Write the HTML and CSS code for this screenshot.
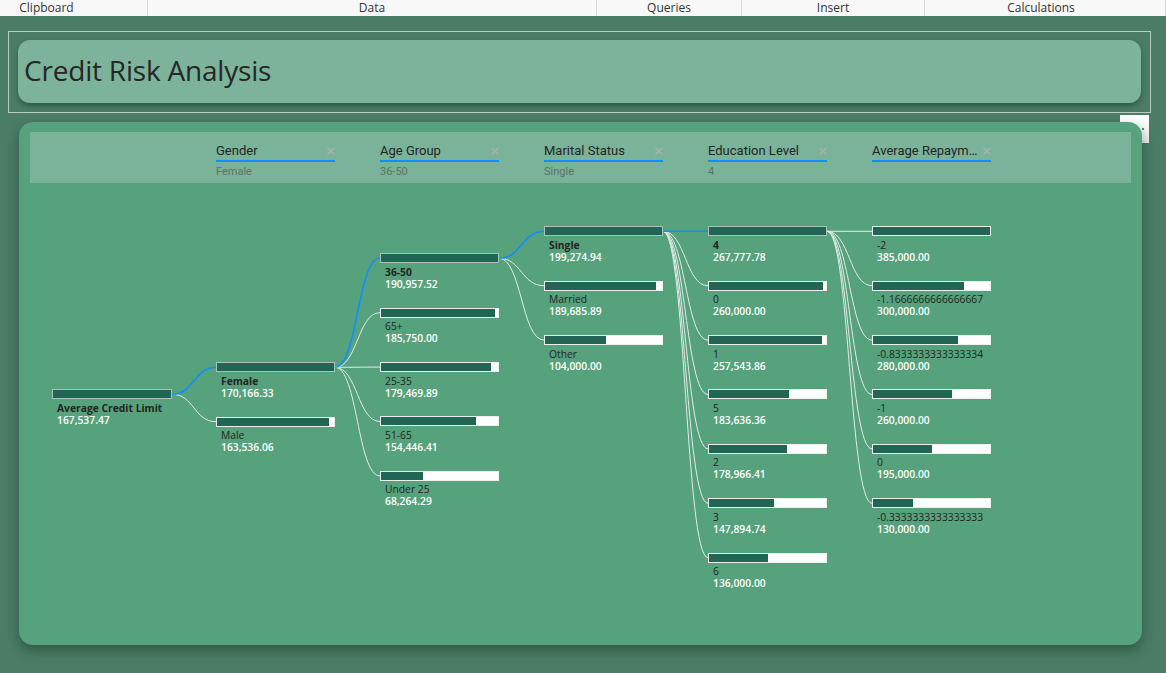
FILE: index.html
```html
<!DOCTYPE html>
<html lang="en">
<head>
<meta charset="utf-8">
<title>Credit Risk Analysis</title>
<link rel="stylesheet" href="styles.css">
</head>
<body>
<div class="ribbon">
  <div class="rcell rc-clip">Clipboard</div>
  <div class="rcell rc-data">Data</div>
  <div class="rcell rc-queries">Queries</div>
  <div class="rcell rc-insert">Insert</div>
  <div class="rcell rc-calc">Calculations</div>
</div>
<div class="canvas">
  <div class="title-frame">
    <div class="title-card"><h1 class="title">Credit Risk Analysis</h1></div>
  </div>
  <div class="vh-square"><span class="vh-dot"></span></div>
  <div class="main-card">
    <div class="band">
      <div class="filter">
        <div class="fhead"><span class="fname">Gender</span><svg class="fx" viewBox="0 0 8 8"><path d="M0.5 0.5L7.5 7.5M7.5 0.5L0.5 7.5"/></svg></div>
        <div class="fval">Female</div>
      </div>
      <div class="filter">
        <div class="fhead"><span class="fname">Age Group</span><svg class="fx" viewBox="0 0 8 8"><path d="M0.5 0.5L7.5 7.5M7.5 0.5L0.5 7.5"/></svg></div>
        <div class="fval">36-50</div>
      </div>
      <div class="filter">
        <div class="fhead"><span class="fname">Marital Status</span><svg class="fx" viewBox="0 0 8 8"><path d="M0.5 0.5L7.5 7.5M7.5 0.5L0.5 7.5"/></svg></div>
        <div class="fval">Single</div>
      </div>
      <div class="filter">
        <div class="fhead"><span class="fname">Education Level</span><svg class="fx" viewBox="0 0 8 8"><path d="M0.5 0.5L7.5 7.5M7.5 0.5L0.5 7.5"/></svg></div>
        <div class="fval">4</div>
      </div>
      <div class="filter">
        <div class="fhead"><span class="fname">Average Repaym…</span><svg class="fx" viewBox="0 0 8 8"><path d="M0.5 0.5L7.5 7.5M7.5 0.5L0.5 7.5"/></svg></div>
        <div class="fval"></div>
      </div>
    </div>

    <div class="tree">
      <svg class="links" width="1101" height="452" viewBox="30 183 1101 452">
        <g class="lk">
          <path d="M172 394.3C194 394.3 194 421.7 216 421.7"/>
          <path d="M335 367.3C357.5 367.3 357.5 312.7 380 312.7"/>
          <path d="M335 367.3C357.5 367.3 357.5 367.1 380 367.1"/>
          <path d="M335 367.3C357.5 367.3 357.5 421.5 380 421.5"/>
          <path d="M335 367.3C357.5 367.3 357.5 475.9 380 475.9"/>
          <path d="M499 258.3C521.5 258.3 521.5 285.7 544 285.7"/>
          <path d="M499 258.3C521.5 258.3 521.5 340.1 544 340.1"/>
          <path d="M663 231.3C685.5 231.3 685.5 285.7 708 285.7"/>
          <path d="M663 231.3C685.5 231.3 685.5 340.1 708 340.1"/>
          <path d="M663 231.3C685.5 231.3 685.5 394.5 708 394.5"/>
          <path d="M663 231.3C685.5 231.3 685.5 448.9 708 448.9"/>
          <path d="M663 231.3C685.5 231.3 685.5 503.3 708 503.3"/>
          <path d="M663 231.3C685.5 231.3 685.5 557.7 708 557.7"/>
          <path d="M827 231.3L872 231.3"/>
          <path d="M827 231.3C849.5 231.3 849.5 285.7 872 285.7"/>
          <path d="M827 231.3C849.5 231.3 849.5 340.1 872 340.1"/>
          <path d="M827 231.3C849.5 231.3 849.5 394.5 872 394.5"/>
          <path d="M827 231.3C849.5 231.3 849.5 448.9 872 448.9"/>
          <path d="M827 231.3C849.5 231.3 849.5 503.3 872 503.3"/>
        </g>
        <g class="lk-sel">
          <path d="M172 394.3C194 394.3 194 367.3 216 367.3"/>
          <path d="M335 367.3C357.5 367.3 357.5 258.3 380 258.3"/>
          <path d="M499 258.3C521.5 258.3 521.5 231.3 544 231.3"/>
          <path d="M663 231.3L708 231.3"/>
        </g>
      </svg>

      <div class="col col-root">
        <div class="node">
          <div class="bar bar-root sel"><div class="fill" style="width:100%"></div></div>
          <div class="lbl b">Average Credit Limit</div>
          <div class="val">167,537.47</div>
        </div>
      </div>

      <div class="col col-l1">
        <div class="node">
          <div class="bar sel"><div class="fill" style="width:100%"></div></div>
          <div class="lbl b">Female</div>
          <div class="val">170,166.33</div>
        </div>
        <div class="node">
          <div class="bar"><div class="fill" style="width:96.1%"></div></div>
          <div class="lbl">Male</div>
          <div class="val">163,536.06</div>
        </div>
      </div>

      <div class="col col-l2">
        <div class="node">
          <div class="bar sel"><div class="fill" style="width:100%"></div></div>
          <div class="lbl b">36-50</div>
          <div class="val">190,957.52</div>
        </div>
        <div class="node">
          <div class="bar"><div class="fill" style="width:97.27%"></div></div>
          <div class="lbl">65+</div>
          <div class="val">185,750.00</div>
        </div>
        <div class="node">
          <div class="bar"><div class="fill" style="width:93.98%"></div></div>
          <div class="lbl">25-35</div>
          <div class="val">179,469.89</div>
        </div>
        <div class="node">
          <div class="bar"><div class="fill" style="width:80.88%"></div></div>
          <div class="lbl">51-65</div>
          <div class="val">154,446.41</div>
        </div>
        <div class="node">
          <div class="bar"><div class="fill" style="width:35.75%"></div></div>
          <div class="lbl">Under 25</div>
          <div class="val">68,264.29</div>
        </div>
      </div>

      <div class="col col-top">
        <div class="node">
          <div class="bar sel"><div class="fill" style="width:100%"></div></div>
          <div class="lbl b">Single</div>
          <div class="val">199,274.94</div>
        </div>
        <div class="node">
          <div class="bar"><div class="fill" style="width:95.19%"></div></div>
          <div class="lbl">Married</div>
          <div class="val">189,685.89</div>
        </div>
        <div class="node">
          <div class="bar"><div class="fill" style="width:52.19%"></div></div>
          <div class="lbl">Other</div>
          <div class="val">104,000.00</div>
        </div>
      </div>

      <div class="col col-top">
        <div class="node">
          <div class="bar sel"><div class="fill" style="width:100%"></div></div>
          <div class="lbl b">4</div>
          <div class="val">267,777.78</div>
        </div>
        <div class="node">
          <div class="bar"><div class="fill" style="width:97.1%"></div></div>
          <div class="lbl">0</div>
          <div class="val">260,000.00</div>
        </div>
        <div class="node">
          <div class="bar"><div class="fill" style="width:96.18%"></div></div>
          <div class="lbl">1</div>
          <div class="val">257,543.86</div>
        </div>
        <div class="node">
          <div class="bar"><div class="fill" style="width:68.58%"></div></div>
          <div class="lbl">5</div>
          <div class="val">183,636.36</div>
        </div>
        <div class="node">
          <div class="bar"><div class="fill" style="width:66.83%"></div></div>
          <div class="lbl">2</div>
          <div class="val">178,966.41</div>
        </div>
        <div class="node">
          <div class="bar"><div class="fill" style="width:55.23%"></div></div>
          <div class="lbl">3</div>
          <div class="val">147,894.74</div>
        </div>
        <div class="node">
          <div class="bar"><div class="fill" style="width:50.79%"></div></div>
          <div class="lbl">6</div>
          <div class="val">136,000.00</div>
        </div>
      </div>

      <div class="col col-top">
        <div class="node">
          <div class="bar"><div class="fill" style="width:100%"></div></div>
          <div class="lbl">-2</div>
          <div class="val">385,000.00</div>
        </div>
        <div class="node">
          <div class="bar"><div class="fill" style="width:77.92%"></div></div>
          <div class="lbl">-1.1666666666666667</div>
          <div class="val">300,000.00</div>
        </div>
        <div class="node">
          <div class="bar"><div class="fill" style="width:72.73%"></div></div>
          <div class="lbl">-0.8333333333333334</div>
          <div class="val">280,000.00</div>
        </div>
        <div class="node">
          <div class="bar"><div class="fill" style="width:67.53%"></div></div>
          <div class="lbl">-1</div>
          <div class="val">260,000.00</div>
        </div>
        <div class="node">
          <div class="bar"><div class="fill" style="width:50.65%"></div></div>
          <div class="lbl">0</div>
          <div class="val">195,000.00</div>
        </div>
        <div class="node">
          <div class="bar"><div class="fill" style="width:33.77%"></div></div>
          <div class="lbl">-0.3333333333333333</div>
          <div class="val">130,000.00</div>
        </div>
      </div>
    </div>
  </div>
</div>
</body>
</html>
```
FILE: styles.css
```css
html, body {
  margin: 0;
  padding: 0;
}
body {
  width: 1166px;
  height: 673px;
  overflow: hidden;
  background: #4a7c66;
  font-family: "Open Sans", "Noto Sans", sans-serif;
}

/* top ribbon */
.ribbon {
  display: flex;
  height: 16px;
  background: #f8f8f8;
  color: #333333;
  font: 12px/16px "Open Sans", "Noto Sans", sans-serif;
}
.rcell {
  box-sizing: border-box;
  border-right: 1px solid #d9d9d9;
  text-align: center;
  white-space: nowrap;
}
.rc-clip { width: 148px; padding-right: 54px; }
.rc-data { width: 449px; }
.rc-queries { width: 145px; }
.rc-insert { width: 183px; }
.rc-calc { width: 241px; padding-right: 8px; }

/* canvas */
.canvas {
  position: relative;
  height: 657px;
  padding-top: 15px;
  box-sizing: border-box;
}
.title-frame {
  box-sizing: border-box;
  margin-left: 8px;
  width: 1143px;
  height: 82px;
  border: 1px solid #b7cdc2;
  padding: 8px 0 0 9px;
}
.title-card {
  box-sizing: border-box;
  width: 1123px;
  height: 63px;
  border-radius: 12px;
  background: #7cb39a;
  box-shadow: 0 3px 5px rgba(20, 50, 36, 0.45);
  display: flex;
  align-items: center;
  padding: 0 0 4px 6px;
}
.title {
  margin: 0;
  font: 400 28px/36px "Open Sans", "Noto Sans", sans-serif;
  letter-spacing: -0.2px;
  color: #262626;
}

.vh-square {
  position: absolute;
  left: 1120px;
  top: 99px;
  width: 29px;
  height: 28px;
  background: linear-gradient(#ffffff, #e9ecea);
}
.vh-dot {
  position: absolute;
  left: 22px;
  top: 13px;
  width: 2px;
  height: 2px;
  background: #6d7a72;
}

/* main card */
.main-card {
  position: relative;
  box-sizing: border-box;
  margin: 9px 0 0 19px;
  width: 1123px;
  height: 523px;
  border-radius: 14px;
  background: #56a27c;
  padding: 10px 11px;
  box-shadow: 0 6px 12px rgba(20, 50, 36, 0.45);
}

.band {
  box-sizing: border-box;
  height: 51px;
  background: #7ab399;
  display: flex;
  gap: 45px;
  padding-left: 186px;
}
.filter {
  width: 119px;
  padding-top: 10.5px;
}
.fhead {
  display: flex;
  align-items: center;
  justify-content: space-between;
  height: 16px;
  padding-bottom: 1.5px;
  border-bottom: 2px solid #118dff;
}
.fname {
  font: 400 13px/16px Roboto, "Noto Sans", sans-serif;
  color: #252423;
  white-space: nowrap;
}
.fx {
  flex: none;
  width: 8px;
  height: 8px;
  margin-left: 2px;
  margin-top: 1px;
  fill: none;
  stroke: #a8b4ad;
  stroke-width: 1.4;
}
.fval {
  margin-top: 2.5px;
  font: 400 11px/13px Roboto, "Noto Sans", sans-serif;
  color: #5d7266;
  height: 13px;
}

/* decomposition tree */
.tree {
  position: relative;
  height: 452px;
  display: flex;
  gap: 44px;
  padding-left: 22px;
}
.links {
  position: absolute;
  left: 0;
  top: 0;
}
.lk path {
  fill: none;
  stroke: #e3ece6;
  stroke-width: 1;
}
.lk-sel path {
  fill: none;
  stroke: #118dff;
  stroke-width: 1.6;
}
.col {
  position: relative;
  width: 120px;
  display: flex;
  flex-direction: column;
}
.col-root { padding-top: 206.3px; }
.col-l1 { padding-top: 179.3px; }
.col-l2 { padding-top: 70.3px; }
.col-top { padding-top: 43.3px; }

.node {
  height: 54.4px;
  flex: none;
}
.bar {
  box-sizing: border-box;
  width: 119px;
  height: 10px;
  background: #ffffff;
  border: 1px solid rgba(196, 214, 204, 0.35);
  overflow: hidden;
}
.bar-root { width: 120px; }
.bar.sel {
  border-color: #a9c3b6;
}
.fill {
  height: 100%;
  background: #236554;
}
.lbl, .val {
  padding-left: 5px;
  font-size: 10.3px;
  line-height: 12px;
  white-space: nowrap;
}
.lbl {
  margin-top: 2.6px;
  color: #252423;
}
.lbl.b {
  font-weight: 700;
}
.val {
  color: #ffffff;
  font-weight: 600;
}
```
